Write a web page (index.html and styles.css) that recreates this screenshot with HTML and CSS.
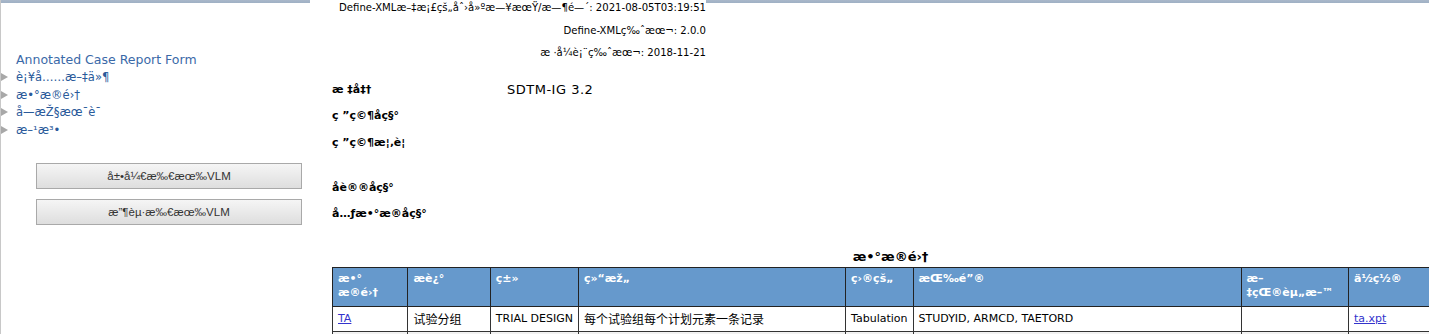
FILE: index.html
```html
<!DOCTYPE html>
<html>
<head>
<meta charset="utf-8">
<title>Define-XML</title>
<link rel="stylesheet" href="styles.css">
</head>
<body>
<div class="page">
  <nav class="sidebar">
    <a class="acrf" href="#">Annotated Case Report Form</a>
    <ul class="tree">
      <li><span class="tri"></span><a href="#">è¡¥å……æ–‡ä»¶</a></li>
      <li><span class="tri"></span><a href="#">æ•°æ®é›†</a></li>
      <li><span class="tri"></span><a href="#">å—æŽ§æœ¯è¯</a></li>
      <li><span class="tri"></span><a href="#">æ–¹æ³•</a></li>
    </ul>
    <div class="buttons">
      <button class="btn">å±•å¼€æ‰€æœ‰VLM</button>
      <button class="btn">æ”¶èµ·æ‰€æœ‰VLM</button>
    </div>
  </nav>
  <main class="main">
    <div class="docinfo">
      <p>Define-XMLæ–‡æ¡£çš„åˆ›å»ºæ—¥æœŸ/æ—¶é—´: 2021-08-05T03:19:51</p>
      <p>Define-XMLç‰ˆæœ¬: 2.0.0</p>
      <p>æ ·å¼è¡¨ç‰ˆæœ¬: 2018-11-21</p>
    </div>
    <table class="study">
      <tr><th>æ ‡å‡†</th><td>SDTM-IG 3.2</td></tr>
      <tr><th>ç ”ç©¶åç§°</th><td></td></tr>
      <tr><th>ç ”ç©¶æ¦‚è¦</th><td></td></tr>
      <tr class="blank"><th></th><td></td></tr>
      <tr><th>åè®®åç§°</th><td></td></tr>
      <tr><th>å…ƒæ•°æ®åç§°</th><td></td></tr>
    </table>
    <table class="datasets">
      <caption>æ•°æ®é›†</caption>
      <thead>
        <tr>
          <th class="c1">æ•°<br>æ®é›†</th>
          <th class="c2">æè¿°</th>
          <th class="c3">ç±»</th>
          <th class="c4">ç»“æž„</th>
          <th class="c5">ç›®çš„</th>
          <th class="c6">æŒ‰é”®</th>
          <th class="c7">æ–<br>‡çŒ®èµ„æ–™</th>
          <th class="c8">ä½ç½®</th>
        </tr>
      </thead>
      <tbody>
        <tr>
          <td><a href="#">TA</a></td>
          <td class="cjk">试验分组</td>
          <td>TRIAL DESIGN</td>
          <td class="cjk">每个试验组每个计划元素一条记录</td>
          <td>Tabulation</td>
          <td>STUDYID, ARMCD, TAETORD</td>
          <td></td>
          <td><a href="#">ta.xpt</a></td>
        </tr>
        <tr class="next">
          <td></td><td></td><td></td><td></td><td></td><td></td><td></td><td></td>
        </tr>
      </tbody>
    </table>
  </main>
</div>
</body>
</html>
```
FILE: styles.css
```css
html, body {
  margin: 0;
  padding: 0;
  overflow: hidden;
}
body {
  background: #fff linear-gradient(#a9b8ca, #9fb0c4) top left / 100% 3px no-repeat;
  font-family: "DejaVu Sans", Verdana, sans-serif;
  color: #000;
  width: 1429px;
  height: 334px;
}
.page {
  display: flex;
  align-items: flex-start;
}
.sidebar {
  width: 331px;
  flex: 0 0 331px;
  box-sizing: border-box;
  border-left: 1px solid #c8c8c8;
  height: 334px;
  padding-top: 52px;
}
.acrf {
  display: block;
  margin-left: 15px;
  font-size: 12.5px;
  letter-spacing: 0;
  color: #3a69a8;
  text-decoration: none;
  line-height: 16px;
}
.tree {
  list-style: none;
  margin: 0;
  padding: 0;
}
.tree li {
  display: flex;
  align-items: center;
  height: 17.7px;
  font-size: 11.5px;
}
.tree a {
  color: #2a5a9a;
  text-decoration: none;
}
.tri {
  width: 0;
  height: 0;
  border-top: 4px solid transparent;
  border-bottom: 4px solid transparent;
  border-left: 7px solid #a8a8a8;
  margin-left: 0;
  margin-right: 8px;
}
.buttons {
  display: flex;
  flex-direction: column;
  gap: 10px;
  margin: 24px 0 0 35px;
  width: 266px;
}
.btn {
  height: 26px;
  border: 1px solid #a9a9a9;
  background: linear-gradient(#f5f5f5, #dedede);
  font-family: "Liberation Sans", Tahoma, sans-serif;
  font-size: 11.5px;
  color: #333;
  padding: 0;
}
.main {
  flex: 0 0 auto;
  padding-left: 1px;
}
.docinfo {
  width: 396px;
  margin-left: -22px;
  background: #fff;
  text-align: right;
  font-size: 10.1px;
  white-space: nowrap;
  margin-top: -3px;
  padding-top: 0;
}
.docinfo p {
  margin: 0;
  line-height: 22.5px;
}
.study {
  border-collapse: collapse;
  margin-top: 12px;
  font-size: 11px;
}
.study th {
  text-align: left;
  font-weight: bold;
  width: 175px;
  padding: 0;
  height: 26.3px;
  vertical-align: middle;
}
.study td {
  padding: 0;
  font-size: 13px;
  letter-spacing: 0.5px;
}
.study tr.blank th {
  height: 19px;
}
.datasets {
  border-collapse: collapse;
  width: 1117px;
  margin-top: 22px;
  font-size: 11px;
}
.datasets caption {
  font-weight: bold;
  font-size: 13px;
  line-height: 16px;
  padding-bottom: 2px;
}
.datasets th {
  background: #6699cc;
  color: #fff;
  font-weight: bold;
  text-align: left;
  vertical-align: top;
  border: 1px solid #222;
  padding: 4px 5px;
  height: 39px;
  line-height: 14px;
  box-sizing: border-box;
}
.datasets td {
  border: 1px solid #333;
  padding: 0 5px;
  height: 24px;
  white-space: nowrap;
}
.datasets tr.next td {
  border-top: 1px solid #999;
  background: #f2f2f2;
  height: 10px;
}
.datasets .cjk {
  font-family: "Noto Sans CJK SC", sans-serif;
  font-size: 12px;
}
.datasets a {
  color: #3333cc;
}
.c1 { width: 76px; }
.c2 { width: 83px; }
.c3 { width: 86px; }
.c4 { width: 269px; }
.c5 { width: 62px; }
.c6 { width: 332px; }
.c7 { width: 108px; }
.c8 { width: 101px; }
```
